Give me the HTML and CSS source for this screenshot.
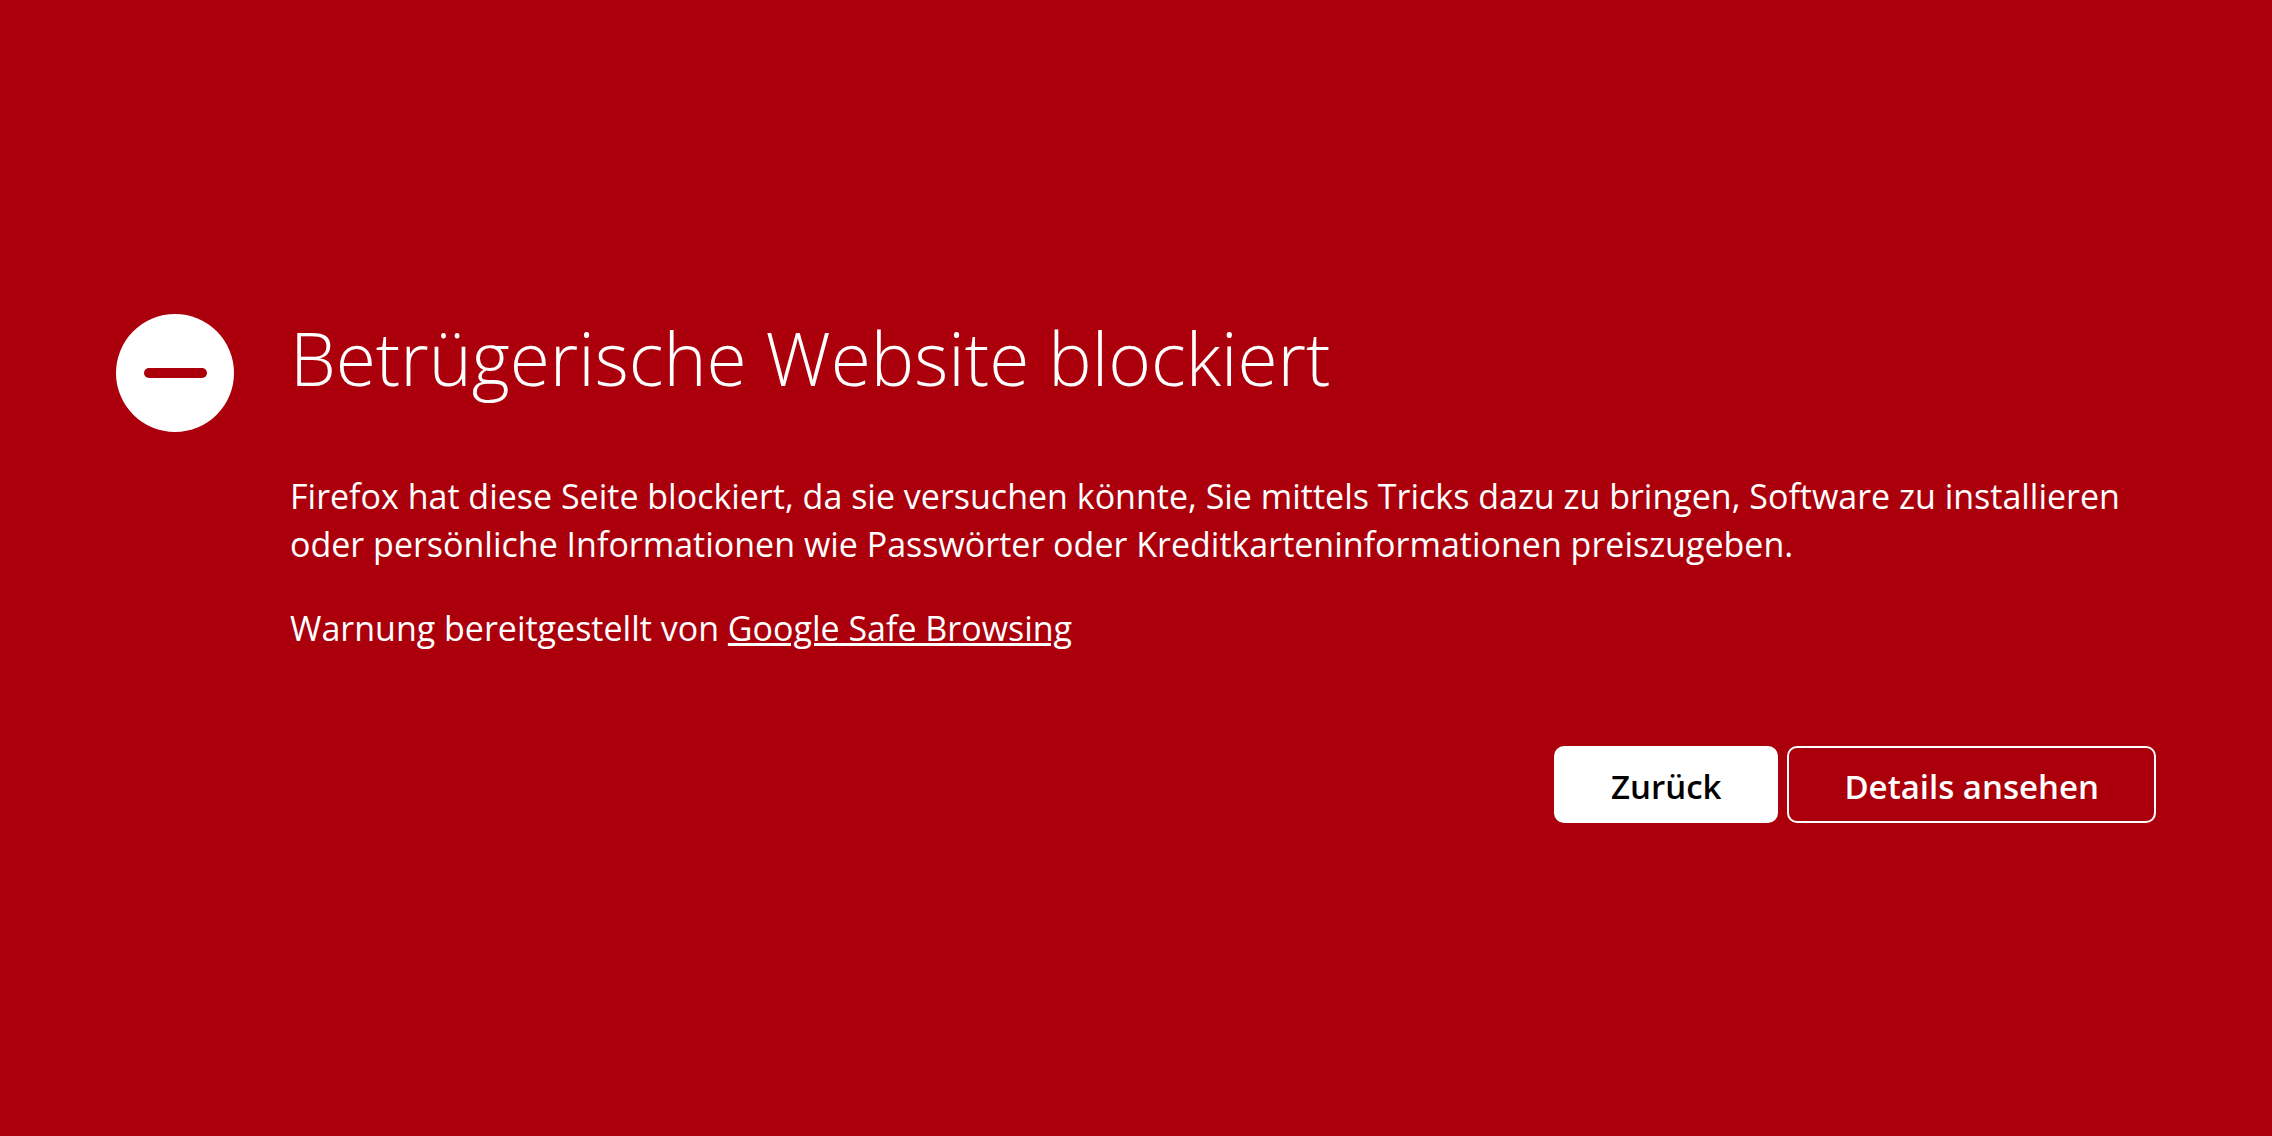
FILE: index.html
```html
<!DOCTYPE html>
<html lang="de">
<head>
  <meta charset="utf-8">
  <title>Betrügerische Website</title>
  <link rel="stylesheet" href="styles.css">
</head>
<body>

<main class="container">
  <svg class="icon" viewBox="0 0 118 118" aria-hidden="true">
    <circle cx="59" cy="59" r="59" fill="#fff"/>
    <rect x="28" y="54" width="63" height="10" rx="5" fill="#ab000b"/>
  </svg>
  <div class="content">
    <h1>Betrügerische Website blockiert</h1>
    <p>Firefox hat diese Seite blockiert, da sie versuchen könnte, Sie mittels Tricks dazu zu bringen, Software zu installieren oder persönliche Informationen wie Passwörter oder Kreditkarteninformationen preiszugeben.</p>
    <p>Warnung bereitgestellt von <a href="#">Google Safe Browsing</a></p>
  </div>
  <div class="buttons">
    <button class="primary">Zurück</button>
    <button class="details">Details ansehen</button>
  </div>
</main>

</body>
</html>
```

FILE: styles.css
```css
body {
  margin: 0;
  min-height: 100vh;
  display: flex;
  align-items: center;
  background: #ab000b;
  color: #fff;
  font-family: "Open Sans", "Noto Sans", sans-serif;
  font-size: 34px;
  line-height: 48px;
}
.container {
  flex: 1;
  display: grid;
  grid-template-columns: 118px 1fr;
  column-gap: 56px;
  padding: 0 116px;
}
.icon {
  width: 118px;
  height: 118px;
}
h1 {
  margin: 0 0 70px;
  font-size: 73px;
  font-weight: 300;
  line-height: 88px;
}
p {
  margin: 0 0 36px;
}
a {
  color: inherit;
}
.buttons {
  grid-column: 1 / -1;
  display: flex;
  justify-content: flex-end;
  gap: 9px;
  margin-top: 58px;
}
button {
  height: 77px;
  padding: 6px 55px 0;
  border: 2px solid #fff;
  border-radius: 10px;
  font: inherit;
  font-size: 33px;
  font-weight: 600;
}
.primary {
  background: #fff;
  color: #000;
}
.details {
  background: transparent;
  color: #fff;
}
```
